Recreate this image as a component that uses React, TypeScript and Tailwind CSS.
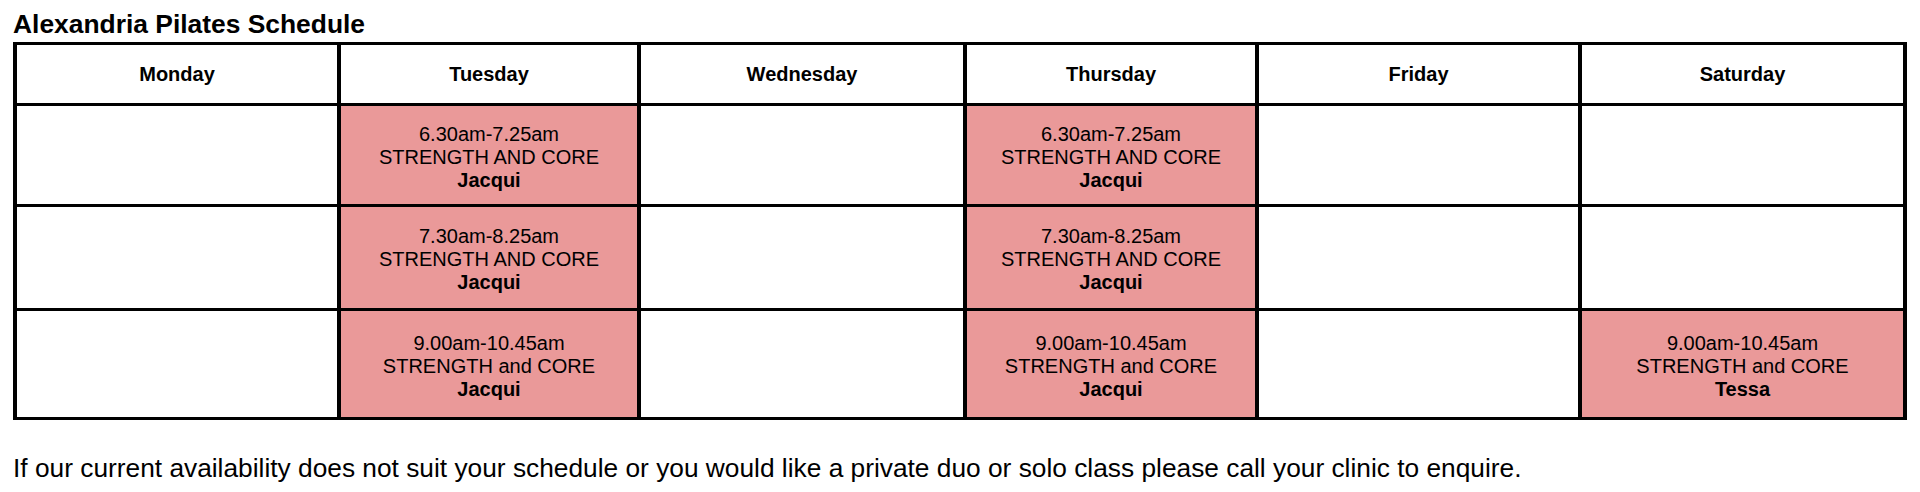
import React from 'react';

type Slot = {
  time: string;
  name: string;
  coach: string;
} | null;

const days = ['Monday', 'Tuesday', 'Wednesday', 'Thursday', 'Friday', 'Saturday'];

const rows: { height: string; slots: Slot[] }[] = [
  {
    height: 'h-[98px]',
    slots: [
      null,
      { time: '6.30am-7.25am', name: 'STRENGTH AND CORE', coach: 'Jacqui' },
      null,
      { time: '6.30am-7.25am', name: 'STRENGTH AND CORE', coach: 'Jacqui' },
      null,
      null,
    ],
  },
  {
    height: 'h-[101px]',
    slots: [
      null,
      { time: '7.30am-8.25am', name: 'STRENGTH AND CORE', coach: 'Jacqui' },
      null,
      { time: '7.30am-8.25am', name: 'STRENGTH AND CORE', coach: 'Jacqui' },
      null,
      null,
    ],
  },
  {
    height: 'h-[106px]',
    slots: [
      null,
      { time: '9.00am-10.45am', name: 'STRENGTH and CORE', coach: 'Jacqui' },
      null,
      { time: '9.00am-10.45am', name: 'STRENGTH and CORE', coach: 'Jacqui' },
      null,
      { time: '9.00am-10.45am', name: 'STRENGTH and CORE', coach: 'Tessa' },
    ],
  },
];

const ScheduleCell: React.FC<{ slot: Slot; height: string }> = ({ slot, height }) => {
  if (!slot) {
    return <div className={`bg-white ${height}`} />;
  }
  return (
    <div className={`bg-[#ea9999] ${height} flex flex-col items-center justify-center text-center leading-[23px] pt-[4px]`}>
      <div>{slot.time}</div>
      <div>{slot.name}</div>
      <div className="font-bold">{slot.coach}</div>
    </div>
  );
};

export default function App() {
  return (
    <div
      className="bg-white text-black min-h-[492px] pl-[13px]"
      style={{ fontFamily: '"Liberation Sans", Arial, sans-serif' }}
    >
      <h2 className="pt-[9px] text-[26.4px] leading-[30px] font-bold">Alexandria Pilates Schedule</h2>

      <div className="mt-[3px] w-[1894px] grid grid-cols-[320px_296px_322px_288px_319px_321px] gap-x-[4px] gap-y-[3px] bg-black px-[4px] py-[3px] text-[20px]">
        {days.map((day) => (
          <div key={day} className="bg-white h-[58px] flex items-center justify-center font-bold leading-[23px]">
            {day}
          </div>
        ))}
        {rows.map((row, i) => (
          <React.Fragment key={i}>
            {row.slots.map((slot, j) => (
              <ScheduleCell key={j} slot={slot} height={row.height} />
            ))}
          </React.Fragment>
        ))}
      </div>

      <p className="mt-[33px] text-[26.3px] leading-[30px]">
        If our current availability does not suit your schedule or you would like a private duo or solo class please call your clinic to enquire.
      </p>
    </div>
  );
}
